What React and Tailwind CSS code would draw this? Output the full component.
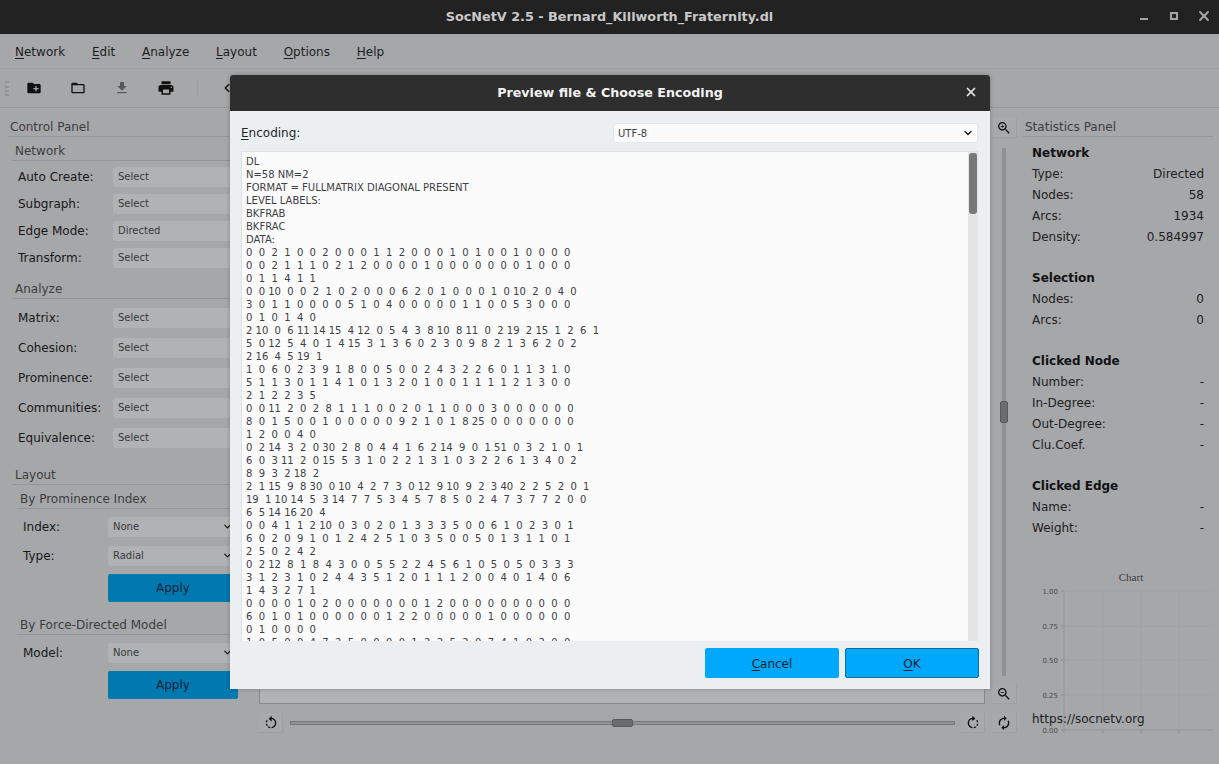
import { ChevronDown, ChevronLeft, X } from "lucide-react";

const font = { fontFamily: '"DejaVu Sans", sans-serif' };

const head = ["DL", "N=58 NM=2", "FORMAT = FULLMATRIX DIAGONAL PRESENT", "LEVEL LABELS:", "BKFRAB", "BKFRAC", "DATA:"];

const rows = [
  "0 0 2 1 0 0 2 0 0 0 1 1 2 0 0 0 1 0 1 0 0 1 0 0 0 0",
  "0 0 2 1 1 1 0 2 1 2 0 0 0 0 1 0 0 0 0 0 0 0 1 0 0 0",
  "0 1 1 4 1 1",
  "0 0 10 0 0 2 1 0 2 0 0 0 6 2 0 1 0 0 0 1 0 10 2 0 4 0",
  "3 0 1 1 0 0 0 0 5 1 0 4 0 0 0 0 0 1 1 0 0 5 3 0 0 0",
  "0 1 0 1 4 0",
  "2 10 0 6 11 14 15 4 12 0 5 4 3 8 10 8 11 0 2 19 2 15 1 2 6 1",
  "5 0 12 5 4 0 1 4 15 3 1 3 6 0 2 3 0 9 8 2 1 3 6 2 0 2",
  "2 16 4 5 19 1",
  "1 0 6 0 2 3 9 1 8 0 0 5 0 0 2 4 3 2 2 6 0 1 1 3 1 0",
  "5 1 1 3 0 1 1 4 1 0 1 3 2 0 1 0 0 1 1 1 1 2 1 3 0 0",
  "2 1 2 2 3 5",
  "0 0 11 2 0 2 8 1 1 1 0 0 2 0 1 1 0 0 0 3 0 0 0 0 0 0",
  "8 0 1 5 0 0 1 0 0 0 0 0 9 2 1 0 1 8 25 0 0 0 0 0 0 0",
  "1 2 0 0 4 0",
  "0 2 14 3 2 0 30 2 8 0 4 4 1 6 2 14 9 0 1 51 0 3 2 1 0 1",
  "6 0 3 11 2 0 15 5 3 1 0 2 2 1 3 1 0 3 2 2 6 1 3 4 0 2",
  "8 9 3 2 18 2",
  "2 1 15 9 8 30 0 10 4 2 7 3 0 12 9 10 9 2 3 40 2 2 5 2 0 1",
  "19 1 10 14 5 3 14 7 7 5 3 4 5 7 8 5 0 2 4 7 3 7 7 2 0 0",
  "6 5 14 16 20 4",
  "0 0 4 1 1 2 10 0 3 0 2 0 1 3 3 3 5 0 0 6 1 0 2 3 0 1",
  "6 0 2 0 9 1 0 1 2 4 2 5 1 0 3 5 0 0 5 0 1 3 1 1 0 1",
  "2 5 0 2 4 2",
  "0 2 12 8 1 8 4 3 0 0 5 5 2 2 4 5 6 1 0 5 0 5 0 3 3 3",
  "3 1 2 3 1 0 2 4 4 3 5 1 2 0 1 1 1 2 0 0 4 0 1 4 0 6",
  "1 4 3 2 7 1",
  "0 0 0 0 1 0 2 0 0 0 0 0 0 0 1 2 0 0 0 0 0 0 0 0 0 0",
  "6 0 1 0 1 0 0 0 0 0 0 1 2 2 0 0 0 0 0 1 0 0 0 0 0 0",
  "0 1 0 0 0 0",
  "1 0 5 0 0 4 7 2 5 0 0 0 0 1 2 2 5 2 0 7 4 1 0 2 0 0",
];

// numbers are printed in 3 character cells, first one without padding
const formatRow = (r) =>
  r.split(" ").map((n, i) => (i === 0 ? n : n.padStart(3, " "))).join("");

function Menu({ letter, rest }) {
  return (
    <span>
      <u className="underline-offset-2">{letter}</u>
      {rest}
    </span>
  );
}

// material style icons
const paths = {
  folderPlus: "M20 6h-8l-2-2H4c-1.1 0-2 .9-2 2v12c0 1.1.9 2 2 2h16c1.1 0 2-.9 2-2V8c0-1.1-.9-2-2-2zm-1 8h-3v3h-2v-3h-3v-2h3V9h2v3h3v2z",
  folderOpen: "M20 6h-8l-2-2H4c-1.1 0-2 .9-2 2v12c0 1.1.9 2 2 2h16c1.1 0 2-.9 2-2V8c0-1.1-.9-2-2-2zm0 12H4V8h16v10z",
  download: "M19 9h-4V3H9v6H5l7 7 7-7zM5 18v2h14v-2H5z",
  print: "M19 8H5c-1.66 0-3 1.34-3 3v6h4v4h12v-4h4v-6c0-1.66-1.34-3-3-3zm-3 11H8v-5h8v5zm3-7c-.55 0-1-.45-1-1s.45-1 1-1 1 .45 1 1-.45 1-1 1zm-1-9H6v4h12V3z",
  rotateRight: "M15.55 5.55L11 1v3.07C7.06 4.56 4 7.92 4 12s3.05 7.44 7 7.93v-2.02c-2.84-.48-5-2.94-5-5.91s2.16-5.43 5-5.91V9l4.55-3.45zM19.93 11c-.17-1.39-.72-2.73-1.62-3.89l-1.42 1.42c.54.75.88 1.6 1.02 2.47h2.02zM13 17.9v2.02c1.39-.17 2.74-.71 3.9-1.61l-1.44-1.44c-.75.54-1.59.89-2.46 1.03zm3.89-2.42l1.42 1.41c.9-1.16 1.45-2.5 1.62-3.89h-2.02c-.14.87-.48 1.72-1.02 2.48z",
  rotateLeft: "M7.11 8.53L5.7 7.11C4.8 8.27 4.24 9.61 4.07 11h2.02c.14-.87.49-1.72 1.02-2.47zM6.09 13H4.07c.17 1.39.72 2.73 1.62 3.89l1.41-1.42c-.52-.75-.87-1.59-1.01-2.47zm1.01 5.32c1.16.9 2.51 1.44 3.9 1.61V17.9c-.87-.15-1.71-.49-2.46-1.03L7.1 18.32zM13 4.07V1L8.45 5.55 13 10V6.09c2.84.48 5 2.94 5 5.91s-2.16 5.43-5 5.91v2.02c3.95-.49 7-3.85 7-7.93s-3.05-7.44-7-7.93z",
  autorenew: "M12 6v3l4-4-4-4v3c-4.42 0-8 3.58-8 8 0 1.57.46 3.03 1.24 4.26L6.7 14.8c-.45-.83-.7-1.79-.7-2.8 0-3.31 2.69-6 6-6zm6.76 1.74L17.3 9.2c.44.84.7 1.79.7 2.8 0 3.31-2.69 6-6 6v-3l-4 4 4 4v-3c4.42 0 8-3.58 8-8 0-1.57-.46-3.03-1.24-4.26z",
  zoomIn: "M15.5 14h-.79l-.28-.27C15.41 12.59 16 11.11 16 9.5 16 5.91 13.09 3 9.5 3S3 5.91 3 9.5 5.91 16 9.5 16c1.61 0 3.09-.59 4.23-1.57l.27.28v.79l5 4.99L20.49 19l-4.99-5zm-6 0C7.01 14 5 11.99 5 9.5S7.01 5 9.5 5 14 7.01 14 9.5 11.99 14 9.5 14zM12 10h-2v2H9v-2H7V9h2V7h1v2h2v1z",
  zoomOut: "M15.5 14h-.79l-.28-.27C15.41 12.59 16 11.11 16 9.5 16 5.91 13.09 3 9.5 3S3 5.91 3 9.5 5.91 16 9.5 16c1.61 0 3.09-.59 4.23-1.57l.27.28v.79l5 4.99L20.49 19l-4.99-5zm-6 0C7.01 14 5 11.99 5 9.5S7.01 5 9.5 5 14 7.01 14 9.5 11.99 14 9.5 14zM7 9h5v1H7z",
};

function Icon({ d, className = "w-[16px] h-[16px]", fill = "#111" }) {
  return (
    <svg viewBox="0 0 24 24" className={className} fill={fill} fillRule="evenodd">
      <path d={d} />
    </svg>
  );
}

function Group({ title, className = "ml-[4px] pl-[3px]" }) {
  return (
    <div className={`h-[18px] leading-[17px] text-[12px] text-[#3c3d3f] border-b border-[#949597] ${className}`}>
      {title}
    </div>
  );
}

function Combo({ label, value, h, left = "w-[105px] pl-[10px]", chevron = false, box = "" }) {
  return (
    <div className={`flex items-center ${h}`}>
      <span className={`shrink-0 text-[12px] text-[#17181a] ${left}`}>{label}</span>
      <div className={`flex items-center justify-between h-[20px] flex-1 rounded-[3px] bg-[#b1b2b3] pl-[5px] pr-[5px] text-[10px] text-[#38393b] ${box}`}>
        <span>{value}</span>
        {chevron && <ChevronDown className="w-[11px] h-[11px] text-[#111]" strokeWidth={2.5} />}
      </div>
    </div>
  );
}

function Apply({ className = "" }) {
  return (
    <div className={`-ml-[8px] pl-[108px] ${className}`}>
      <div className="h-[28px] rounded-[2px] bg-[#0078b0] flex items-center justify-center text-[12px] text-[#06223a]">
        Apply
      </div>
    </div>
  );
}

function Stat({ label, value }) {
  return (
    <div className="flex justify-between h-[21px] leading-[21px] text-[12px] text-[#202123]">
      <span>{label}</span>
      <span>{value}</span>
    </div>
  );
}

function StatTitle({ children, className = "" }) {
  return <div className={`h-[21px] leading-[21px] text-[12px] font-bold text-[#111214] ${className}`}>{children}</div>;
}

function ToolBtn({ d, className = "w-[24px]" }) {
  return (
    <div className={`flex items-center justify-center h-[20px] shrink-0 bg-[#a8a9ab] border-r border-b border-[#9e9fa1] ${className}`}>
      <Icon d={d} className="w-[16px] h-[16px]" />
    </div>
  );
}

function Chart() {
  const ticks = [
    ["1.00", 591],
    ["0.75", 626],
    ["0.50", 660],
    ["0.25", 695],
    ["0.00", 730],
  ];
  return (
    <svg viewBox="0 570 194 170" className="w-[194px] h-[170px]">
      <text x="106" y="580.5" fontFamily="Liberation Serif, serif" fontSize="11" fill="#3c3d3f" textAnchor="middle">
        Chart
      </text>
      {[78, 116, 154].map((x) => (
        <g key={x}>
          <line x1={x} x2={x} y1="591" y2="730" stroke="#a1a2a4" />
          <line x1={x} x2={x} y1="730" y2="733" stroke="#8e8f91" />
        </g>
      ))}
      {ticks.map(([t, y]) => (
        <g key={t}>
          <line x1="39" x2="188" y1={y} y2={y} stroke="#a1a2a4" />
          <line x1="36" x2="39" y1={y} y2={y} stroke="#8e8f91" />
          <text x="33" y={y + 2.5} fontFamily="DejaVu Sans, sans-serif" fontSize="7" fill="#47484a" textAnchor="end">
            {t}
          </text>
        </g>
      ))}
      <line x1="39" x2="39" y1="591" y2="733" stroke="#949597" />
      <line x1="36" x2="188" y1="730" y2="730" stroke="#949597" />
    </svg>
  );
}

function PreviewDialog() {
  return (
    <div className="absolute left-[230px] top-[75px] w-[760px] h-[614px] flex flex-col bg-[#eceff2] rounded-t-[3px] shadow-[0_0_4px_rgba(0,0,0,0.25)]">
      <div className="relative h-[36px] shrink-0 rounded-t-[3px] bg-[#2e2e2e] flex items-center justify-center text-[12.7px] font-bold text-[#f2f2f2]">
        Preview file &amp; Choose Encoding
        <X className="absolute right-[12px] top-[10px] w-[14px] h-[14px] text-[#e8e8e8]" strokeWidth={3} />
      </div>
      <div className="flex items-center h-[20px] mt-[12px] pl-[11px] pr-[12px] shrink-0">
        <span className="w-[372px] text-[12px] text-[#232629]">
          <u className="underline-offset-2">E</u>ncoding:
        </span>
        <div className="flex-1 h-[20px] flex items-center justify-between rounded-[3px] bg-[#fbfbfb] border border-[#e3e6e9] pl-[4px] pr-[3px] text-[10px] text-[#3b4045]">
          UTF-8
          <ChevronDown className="w-[12px] h-[12px] text-[#111]" strokeWidth={2.5} />
        </div>
      </div>
      <div className="relative mt-[8px] ml-[11px] mr-[12px] h-[490px] shrink-0 overflow-hidden bg-[#fbfbfb] border-t border-l border-[#dfe2e5]">
        <div className="pl-[4px] pt-[3px] text-[10px] leading-[13px] text-[#3b4045] whitespace-pre">
          {head.map((l) => (
            <div key={l}>{l}</div>
          ))}
          {rows.map((r, i) => (
            <div key={i}>{formatRow(r)}</div>
          ))}
        </div>
        <div className="absolute right-0 top-0 bottom-0 w-[10px] bg-[#e3e5e7]">
          <div className="mx-[1px] mt-[1px] h-[61px] rounded-[3px] bg-[#76787a]" />
        </div>
      </div>
      <div className="flex justify-end gap-[6px] mt-[7px] pr-[11px]">
        <div className="w-[134px] h-[30px] pt-[1px] flex items-center justify-center rounded-[2px] bg-[#00a8fc] text-[12px] text-[#10222f]">
          <span>
            <u className="underline-offset-2">C</u>ancel
          </span>
        </div>
        <div className="w-[134px] h-[30px] pt-[1px] flex items-center justify-center rounded-[2px] bg-[#00a8fc] border border-[#0a6ea5] text-[12px] text-[#10222f]">
          <span>
            <u className="underline-offset-2">O</u>K
          </span>
        </div>
      </div>
    </div>
  );
}

export default function App() {
  return (
    <div className="relative w-[1219px] h-[764px] overflow-hidden flex flex-col bg-[#a6a7a9]" style={font}>
      {/* window title */}
      <div className="relative h-[34px] shrink-0 bg-[#222222] flex items-center justify-center text-[12.8px] font-bold text-[#c9c9c9]">
        SocNetV 2.5 - Bernard_Killworth_Fraternity.dl
        <div className="absolute right-[11px] top-[12px] h-[8px] flex gap-[22px] text-[#a6a6a6]">
          <div className="w-[8px] h-[2px] mt-[6px] bg-[#a6a6a6]" />
          <div className="w-[8px] h-[8px] border-2 border-[#a6a6a6]" />
          <X className="w-[16px] h-[16px] -m-[4px]" strokeWidth={3} />
        </div>
      </div>

      {/* menu */}
      <div className="h-[35px] shrink-0 pt-[2px] flex items-center gap-[26.8px] pl-[15px] text-[12px] text-[#1c1d1f] border-b border-[#9d9ea0]">
        <Menu letter="N" rest="etwork" />
        <Menu letter="E" rest="dit" />
        <Menu letter="A" rest="nalyze" />
        <Menu letter="L" rest="ayout" />
        <Menu letter="O" rest="ptions" />
        <Menu letter="H" rest="elp" />
      </div>

      {/* toolbar */}
      <div className="h-[39px] shrink-0 flex items-center pl-[5px] border-b border-[#949597]">
        <div className="w-[4px] h-[15px] border-x-2 border-dotted border-[#939496]" />
        <div className="w-[16px] ml-[17px] flex justify-center"><Icon d={paths.folderPlus} /></div>
        <div className="w-[16px] ml-[28px] flex justify-center"><Icon d={paths.folderOpen} /></div>
        <div className="w-[16px] ml-[28px] flex justify-center"><Icon d={paths.download} fill="#55575a" /></div>
        <div className="w-[16px] ml-[28px] flex justify-center"><Icon d={paths.print} className="w-[18px] h-[18px] shrink-0" /></div>
        <div className="w-px h-[16px] ml-[23px] bg-[#9d9ea0]" />
        <ChevronLeft className="ml-[22px] w-[14px] h-[14px] text-[#111]" strokeWidth={2.5} />
      </div>

      <div className="flex flex-1 min-h-0">
        {/* control panel */}
        <div className="w-[230px] ml-[8px] shrink-0 pt-[11px]">
          <Group title="Control Panel" className="pl-[2px]" />
          <Group title="Network" className="ml-[4px] pl-[3px] mt-[6px]" />
          <div className="mt-[2px]">
            <Combo label="Auto Create:" value="Select" h="h-[27px]" />
            <Combo label="Subgraph:" value="Select" h="h-[27px]" />
            <Combo label="Edge Mode:" value="Directed" h="h-[27px]" />
            <Combo label="Transform:" value="Select" h="h-[27px]" />
          </div>
          <Group title="Analyze" className="ml-[4px] pl-[3px] mt-[10px]" />
          <div className="mt-[4px]">
            <Combo label="Matrix:" value="Select" h="h-[30px]" box="pb-[1px]" />
            <Combo label="Cohesion:" value="Select" h="h-[30px]" box="pb-[1px]" />
            <Combo label="Prominence:" value="Select" h="h-[30px]" box="pb-[1px]" />
            <Combo label="Communities:" value="Select" h="h-[30px]" box="pb-[1px]" />
            <Combo label="Equivalence:" value="Select" h="h-[30px]" box="pb-[1px]" />
          </div>
          <Group title="Layout" className="ml-[4px] pl-[3px] mt-[14px]" />
          <Group title="By Prominence Index" className="ml-[9px] pl-[3px] mt-[6px]" />
          <div className="mt-[3px]">
            <Combo label="Index:" value="None" h="h-[29px]" left="w-[100px] pl-[15px]" chevron />
            <Combo label="Type:" value="Radial" h="h-[29px]" left="w-[100px] pl-[15px]" chevron />
          </div>
          <Apply className="mt-[4px]" />
          <Group title="By Force-Directed Model" className="ml-[9px] pl-[3px] mt-[15px]" />
          <div className="mt-[3px]">
            <Combo label="Model:" value="None" h="h-[29px]" left="w-[100px] pl-[15px]" chevron />
          </div>
          <Apply className="mt-[4px]" />
        </div>

        {/* canvas */}
        <div className="flex-1 min-w-0 pl-[21px] pr-[7px] flex flex-col">
          <div className="h-[596px] shrink-0 border-l border-b border-r border-[#88898b] bg-[#b1b2b3]" />
          <div className="flex items-center h-[20px] mt-[9px]">
            <ToolBtn d={paths.rotateLeft} />
            <div className="relative flex-1 ml-[7px] mr-[6px] h-[4px] bg-[#909193] border border-[#77787a]">
              <div className="absolute left-[321px] -top-[3px] w-[21px] h-[8px] rounded-[2px] bg-[#6b6c6e] border border-[#58595b]" />
            </div>
            <ToolBtn d={paths.rotateRight} />
          </div>
        </div>

        {/* zoom column */}
        <div className="w-[25px] shrink-0 mr-[8px] pt-[10px] flex flex-col">
          <ToolBtn d={paths.zoomIn} className="w-[25px]" />
          <div className="relative w-[4px] h-[528px] mt-[10px] ml-[10px] bg-[#909193]">
            <div className="absolute -left-[2px] top-[253px] w-[8px] h-[22px] rounded-[2px] bg-[#6b6c6e] border border-[#58595b]" />
          </div>
          <ToolBtn d={paths.zoomOut} className="w-[25px] mt-[8px]" />
          <ToolBtn d={paths.autorenew} className="w-[25px] mt-[9px]" />
        </div>

        {/* statistics */}
        <div className="w-[194px] shrink-0 pt-[11px] pr-[6px] relative">
          <Group title="Statistics Panel" className="-ml-[2px] pl-[2px]" />
          <div className="pl-[7px] pr-[9px] mt-[6px]">
            <StatTitle>Network</StatTitle>
            <Stat label="Type:" value="Directed" />
            <Stat label="Nodes:" value="58" />
            <Stat label="Arcs:" value="1934" />
            <Stat label="Density:" value="0.584997" />
            <StatTitle className="mt-[20px]">Selection</StatTitle>
            <Stat label="Nodes:" value="0" />
            <Stat label="Arcs:" value="0" />
            <StatTitle className="mt-[20px]">Clicked Node</StatTitle>
            <Stat label="Number:" value="-" />
            <Stat label="In-Degree:" value="-" />
            <Stat label="Out-Degree:" value="-" />
            <Stat label="Clu.Coef." value="-" />
            <StatTitle className="mt-[20px]">Clicked Edge</StatTitle>
            <Stat label="Name:" value="-" />
            <Stat label="Weight:" value="-" />
          </div>
          <div className="mt-[31px]"><Chart /></div>
          <div className="absolute left-[7px] top-[602px] text-[12px] text-[#202123]">https://socnetv.org</div>
        </div>
      </div>

      <PreviewDialog />
    </div>
  );
}
